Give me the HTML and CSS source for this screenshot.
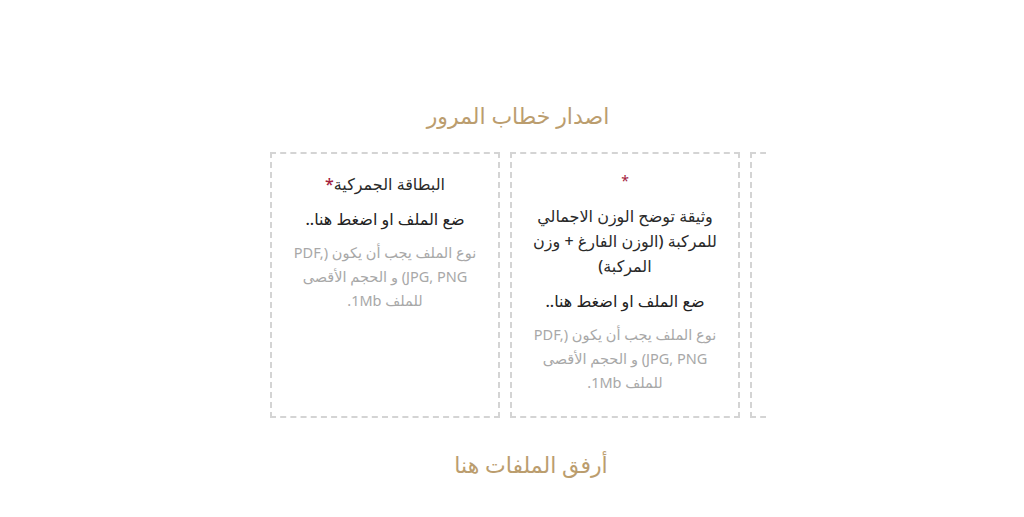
FILE: index.html
```html
<!DOCTYPE html>
<html lang="ar" dir="rtl">
<head>
  <meta charset="UTF-8" />
  <meta name="viewport" content="width=device-width, initial-scale=1.0"/>
  <title>اصدار خطاب المرور</title>
  <link rel="stylesheet" href="styles.css">
</head>
<body>

  <section class="upload">
    <h2 class="upload-title">اصدار خطاب المرور</h2>

    <div class="slider">
      <div class="track">
        <!-- first slide is cut off by the slider edge -->
        <div class="drop"></div>

        <div class="drop">
          <p class="req-line"><span class="req">*</span></p>
          <p class="label">وثيقة توضح الوزن الاجمالي للمركبة (الوزن الفارغ + وزن المركبة)</p>
          <p class="hint">ضع الملف او اضغط هنا..</p>
          <p class="note">نوع الملف يجب أن يكون (PDF, JPG, PNG) و الحجم الأقصى للملف 1Mb.</p>
        </div>

        <div class="drop">
          <p class="label">البطاقة الجمركية<span class="req">*</span></p>
          <p class="hint">ضع الملف او اضغط هنا..</p>
          <p class="note">نوع الملف يجب أن يكون (PDF, JPG, PNG) و الحجم الأقصى للملف 1Mb.</p>
        </div>
      </div>
    </div>

    <h2 class="attach-title">أرفق الملفات هنا</h2>
  </section>

</body>
</html>
```

FILE: styles.css
```css
*{margin:0;padding:0;box-sizing:border-box;}
body{font-family:"Noto Sans","DejaVu Sans",sans-serif;background:#fff;color:#333;}

.upload{padding-top:99px;}
.upload-title{text-align:center;font-size:22px;line-height:32px;font-weight:normal;color:#bb9d6e;margin-bottom:21px;padding-left:12px;}

.slider{width:508px;margin:0 auto;padding-left:12px;overflow:hidden;}
.track{display:flex;gap:10px;margin-right:-214px;}
.drop{flex:0 0 230px;height:266px;border:2px dashed #d4d4d4;padding:18px 16px 0;text-align:center;}

.label{font-size:16px;line-height:25px;font-weight:500;color:#2a2a2a;margin-bottom:10px;}
.req{color:#a3213d;}
.req-line{font-size:14px;line-height:17px;margin-bottom:15px;}
.hint{font-size:16px;line-height:25px;font-weight:500;color:#222;margin-bottom:8px;}
.note{font-size:14.5px;line-height:24px;color:#a8a8a8;}

.attach-title{text-align:center;font-size:22px;line-height:32px;font-weight:normal;color:#bb9d6e;margin-top:30px;padding-left:38px;}
```
